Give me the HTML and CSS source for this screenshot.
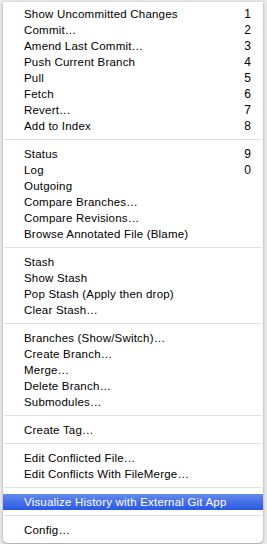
FILE: index.html
```html
<html>
<head>
<meta charset="utf-8">
<title>Git menu</title>
<link rel="stylesheet" href="styles.css">
</head>
<body>
<div class="backdrop">
  <div class="menu">
    <div class="item"><span>Show Uncommitted Changes</span><span class="key">1</span></div>
    <div class="item"><span>Commit…</span><span class="key">2</span></div>
    <div class="item"><span>Amend Last Commit…</span><span class="key">3</span></div>
    <div class="item"><span>Push Current Branch</span><span class="key">4</span></div>
    <div class="item"><span>Pull</span><span class="key">5</span></div>
    <div class="item"><span>Fetch</span><span class="key">6</span></div>
    <div class="item"><span>Revert…</span><span class="key">7</span></div>
    <div class="item"><span>Add to Index</span><span class="key">8</span></div>
    <div class="sep"></div>
    <div class="item"><span>Status</span><span class="key">9</span></div>
    <div class="item"><span>Log</span><span class="key">0</span></div>
    <div class="item"><span>Outgoing</span></div>
    <div class="item"><span>Compare Branches…</span></div>
    <div class="item"><span>Compare Revisions…</span></div>
    <div class="item"><span>Browse Annotated File (Blame)</span></div>
    <div class="sep"></div>
    <div class="item"><span>Stash</span></div>
    <div class="item"><span>Show Stash</span></div>
    <div class="item"><span>Pop Stash (Apply then drop)</span></div>
    <div class="item"><span>Clear Stash…</span></div>
    <div class="sep"></div>
    <div class="item"><span>Branches (Show/Switch)…</span></div>
    <div class="item"><span>Create Branch…</span></div>
    <div class="item"><span>Merge…</span></div>
    <div class="item"><span>Delete Branch…</span></div>
    <div class="item"><span>Submodules…</span></div>
    <div class="sep"></div>
    <div class="item"><span>Create Tag…</span></div>
    <div class="sep"></div>
    <div class="item"><span>Edit Conflicted File…</span></div>
    <div class="item"><span>Edit Conflicts With FileMerge…</span></div>
    <div class="sep"></div>
    <div class="item selected"><span>Visualize History with External Git App</span></div>
    <div class="sep"></div>
    <div class="item"><span>Config…</span></div>
  </div>
</div>
</body>
</html>
```

FILE: styles.css
```css
html, body { margin: 0; padding: 0; }
body {
  width: 267px;
  height: 544px;
  overflow: hidden;
  background: #e9e9e9;
  font-family: "Liberation Sans", Arial, sans-serif;
}
.backdrop {
  padding: 2px 4px 0 3px;
}
.menu {
  background: rgba(255, 255, 255, 0.97);
  border-radius: 0 0 5px 5px;
  box-shadow: 0 1px 3px rgba(0, 0, 0, 0.35);
  padding: 4px 0 5px;
  width: 260px;
}
.item {
  display: flex;
  justify-content: space-between;
  height: 16px;
  line-height: 16px;
  padding: 0 12px 0 21px;
  font-size: 11.5px;
  letter-spacing: 0.2px;
  color: #000;
  white-space: nowrap;
}
.item .key {
  font-size: 12px;
}
.item.selected {
  background: linear-gradient(#6489ed, #2a58e4);
  color: #fff;
}
.sep {
  height: 1px;
  margin: 5px 1px 6px;
  background: #e1e1e1;
}
```
